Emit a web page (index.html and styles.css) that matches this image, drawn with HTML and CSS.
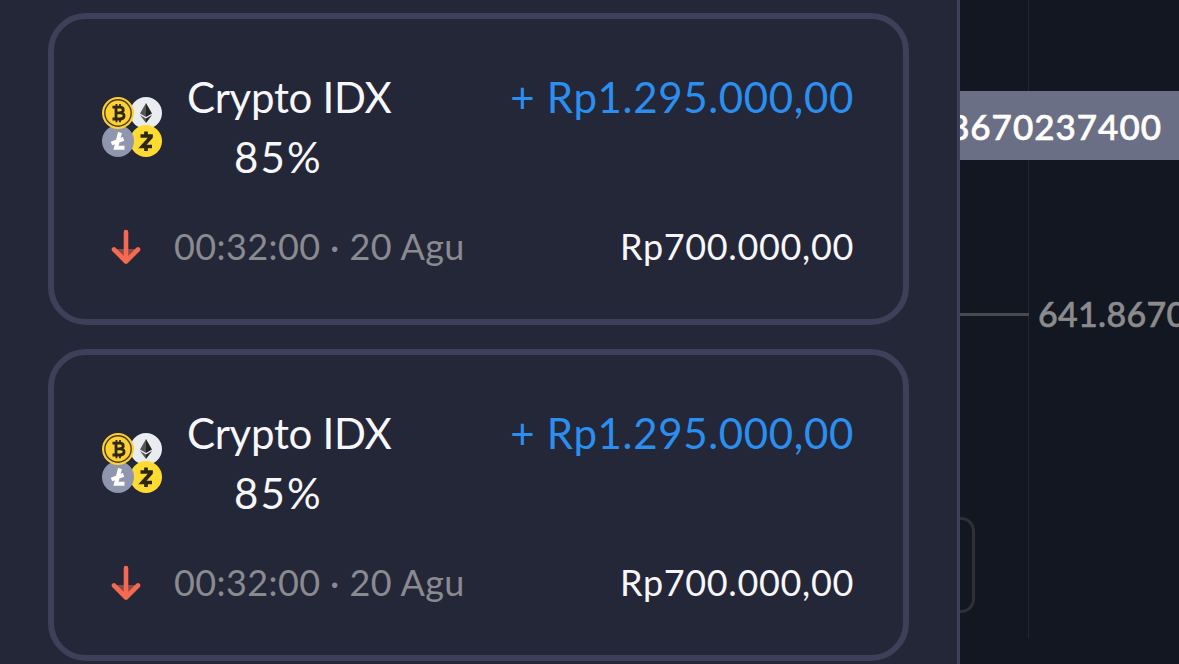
FILE: index.html
```
<!DOCTYPE html>
<html lang="id">

<head>
    <meta charset="UTF-8">
    <meta name="viewport" content="width=device-width, initial-scale=1.0">
    <title>Crypto IDX</title>
    <link rel="stylesheet" href="styles.css">
</head>

<body>
    <svg class="defs" width="0" height="0">
        <symbol id="coins" viewBox="0 0 60 60">
            <circle cx="44" cy="16" r="16" fill="#e9edf0" />
            <circle cx="44" cy="44" r="16" fill="#fddb32" />
            <circle cx="16" cy="44" r="16" fill="#8f96ae" />
            <circle cx="16" cy="16" r="16" fill="#fdd033" />
            <circle cx="16" cy="16" r="13.2" fill="none" stroke="#4a3e20" stroke-width="1.4" />
            <!-- btc -->
            <g fill="none" stroke="#2b2618" stroke-width="2.8">
                <path d="M10.500 10.200h7c5 0 5 5.600 0 5.600h-3M14 15.800h4.400c5 0 5 6.200-.6 6.200h-7.300M14 10v12" />
                <path d="M14.500 7v3M18 7v3M14.500 22v3.300M18 22v3.300" stroke-width="1.800" />
            </g>
            <!-- eth -->
            <path d="M44 6l-6 10.500 6 3.600z" fill="#555" />
            <path d="M44 6l6 10.500-6 3.600z" fill="#222" />
            <path d="M38 18l6 8v-4.600z" fill="#555" />
            <path d="M50 18l-6 8v-4.600z" fill="#222" />
            <!-- ltc -->
            <path d="M18 35.500l-4 15.300h8.500M9.500 46.500l12-4.600" fill="none" stroke="#fff" stroke-width="4" />
            <!-- zec -->
            <path d="M38.500 39h10.500v1l-8.500 9.500h9.500M44 34.500v4M44 50v4" fill="none" stroke="#2b2618" stroke-width="3.700" />
        </symbol>
        <symbol id="arrow" viewBox="0 0 30 36">
            <path d="M3 20h24L15 32z" fill="#8a4748" />
            <path d="M15 3v29M3 20.500l12 12 12-12" fill="none" stroke="#f4694f" stroke-width="4.600" stroke-linecap="round" stroke-linejoin="round" />
        </symbol>
    </svg>
    <div class="panel">
        <div class="card">
            <div class="top">
                <svg class="coins"><use href="#coins" /></svg>
                <div class="asset">
                    <p class="name">Crypto IDX</p>
                    <p class="percent">85%</p>
                </div>
                <div class="profit">+ Rp1.295.000,00</div>
            </div>
            <div class="bottom">
                <svg class="arrow"><use href="#arrow" /></svg>
                <div class="time">00:32:00 · 20 Agu</div>
                <div class="sum">Rp700.000,00</div>
            </div>
        </div>
        <div class="card">
            <div class="top">
                <svg class="coins"><use href="#coins" /></svg>
                <div class="asset">
                    <p class="name">Crypto IDX</p>
                    <p class="percent">85%</p>
                </div>
                <div class="profit">+ Rp1.295.000,00</div>
            </div>
            <div class="bottom">
                <svg class="arrow"><use href="#arrow" /></svg>
                <div class="time">00:32:00 · 20 Agu</div>
                <div class="sum">Rp700.000,00</div>
            </div>
        </div>
    </div>
    <div class="chart">
        <div class="axis"></div>
        <div class="price">8670237400</div>
        <div class="level"></div>
        <div class="levelText">641.8670</div>
        <div class="chartBtn"></div>
    </div>
</body>

</html>
```
FILE: styles.css
```
* {
    padding: 0;
    margin: 0;
    box-sizing: border-box;
}

body {
    display: flex;
    height: 664px;
    overflow: hidden;
    background-color: #131722;
    font-family: Lato, "Open Sans", sans-serif;
    color: #f7f6fb;
}

.defs {
    position: absolute;
}

.panel {
    width: 960px;
    height: 664px;
    padding: 13px 48px 0;
    background-color: #242737;
    border-right: 3px solid #3c4059;
    flex-shrink: 0;
}

.card {
    width: 861px;
    height: 312px;
    padding: 48px;
    margin-bottom: 24px;
    border: 6px solid #3c4059;
    border-radius: 38px;
}

.top {
    display: flex;
    align-items: center;
    height: 120px;
    font-size: 42px;
    line-height: 60px;
}

.coins {
    width: 60px;
    height: 60px;
    margin-right: 25px;
}

.name {
    letter-spacing: -0.3px;
}

.percent {
    padding-left: 47px;
    letter-spacing: 2.2px;
}

.profit {
    margin-left: auto;
    margin-right: 1px;
    align-self: flex-start;
    color: #2a8ff0;
    letter-spacing: 0.65px;
}

.bottom {
    display: flex;
    align-items: center;
    height: 48px;
    margin-top: 35px;
    font-size: 36px;
    line-height: 48px;
}

.arrow {
    width: 30px;
    height: 36px;
    margin: 2px 33px 0 9px;
}

.time {
    color: #8a8b90;
    letter-spacing: 0.4px;
}

.sum {
    margin-left: auto;
    margin-right: 1px;
    letter-spacing: 0.65px;
}

/* chart behind the panel */
.chart {
    position: relative;
    width: 219px;
    height: 664px;
    overflow: hidden;
    font-size: 35px;
    font-weight: 500;
}

.axis {
    position: absolute;
    left: 68px;
    top: 0;
    width: 1px;
    height: 638px;
    background-color: #222632;
}

.price {
    position: absolute;
    right: 0;
    top: 91px;
    width: 219px;
    height: 69px;
    padding-right: 17px;
    display: flex;
    justify-content: flex-end;
    line-height: 70px;
    letter-spacing: 1px;
    background-color: #6a6f86;
    color: #fffdfa;
    -webkit-text-stroke: 0.7px #fffdfa;
}

.level {
    position: absolute;
    left: 0;
    top: 313px;
    width: 69px;
    height: 3px;
    background-color: #4a4a4e;
}

.levelText {
    position: absolute;
    left: 78px;
    top: 289px;
    line-height: 50px;
    font-size: 34px;
    letter-spacing: 0.3px;
    color: #8b8b8b;
    -webkit-text-stroke: 0.6px #8b8b8b;
}

.chartBtn {
    position: absolute;
    left: -30px;
    top: 517px;
    width: 45px;
    height: 96px;
    border: 3px solid #302f35;
    border-radius: 14px;
}
```
